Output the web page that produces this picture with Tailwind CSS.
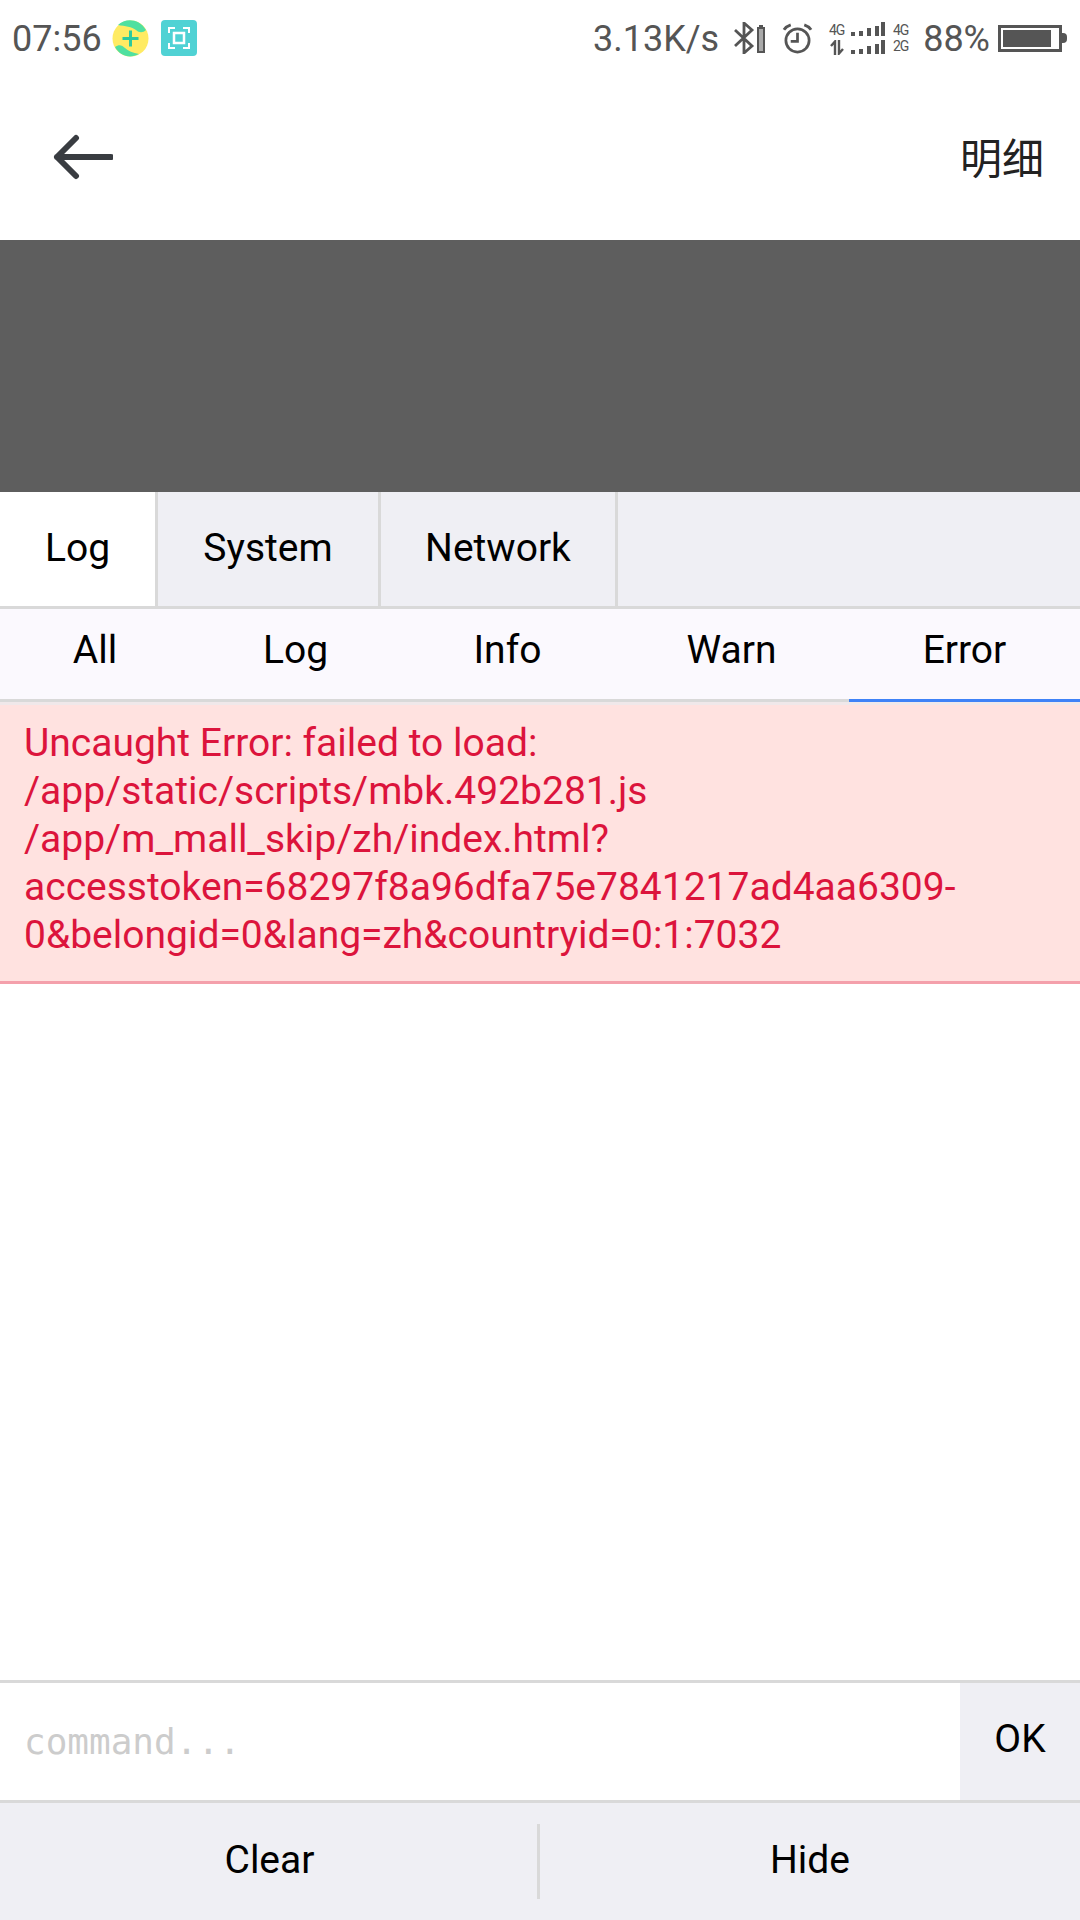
<!DOCTYPE html>
<html>
<head>
<meta charset="utf-8">
<script src="https://cdn.jsdelivr.net/npm/@tailwindcss/browser@4"></script>
</head>
<body class="m-0 bg-white font-['Roboto',sans-serif]">
<div class="flex h-[1920px] w-[1080px] flex-col overflow-hidden bg-white text-black">
  <!-- status bar -->
  <div class="flex h-[76px] shrink-0 items-center pl-[12px] pr-[13px] text-[#555] text-[36px]">
    <span class="pt-[1px] leading-none">07:56</span>
    <svg class="ml-[10px]" width="37" height="37" viewBox="0 0 37 37"><circle cx="18.500" cy="18.500" r="18" fill="#ffeb63"/><path d="M6 5C13-2 27-2 34 10 31 13 27 13 24 10 20 7 13 6 6 5Z" fill="#4fe0a0"/><path d="M3 27C7 24 10 25 13 28 16 31 21 33 27 34 18 39 8 36 3 27Z" fill="#4fe0a0"/><path d="M18.500 10.500v16M10.500 18.500h16" stroke="#2cc9a0" stroke-width="3" fill="none"/></svg>
    <svg class="ml-[12px]" width="36" height="36" viewBox="0 0 36 36"><rect width="36" height="36" rx="4" fill="#50d2d4"/><path d="M8 13V8h6M22 8h6v5M28 23v5h-6M14 28H8v-5" stroke="#fff" stroke-width="2" fill="none"/><rect x="13" y="13" width="10" height="10" stroke="#fff" stroke-width="2.500" fill="none"/></svg>
    <span class="ml-auto pt-[1px] leading-none">3.13K/s</span>
    <svg class="ml-[15px]" width="32" height="32" viewBox="0 0 32 32"><path d="M1 8l17 16-8 7V1l8 7L1 24" stroke="#555" stroke-width="2.800" fill="none"/><rect x="24" y="6" width="6" height="24" stroke="#555" stroke-width="2" fill="#aaa"/><rect x="25" y="3" width="4" height="3" fill="#555"/></svg>
    <svg class="ml-[16px]" width="31" height="31" viewBox="0 0 32 32"><circle cx="16" cy="18" r="12" stroke="#555" stroke-width="2.800" fill="none"/><path d="M16 10v9H9" stroke="#555" stroke-width="2.800" fill="none"/><path d="M2 7c2-3 4-4 7-5M30 7c-2-3-4-4-7-5" stroke="#555" stroke-width="3" fill="none"/></svg>
    <div class="ml-[14px] flex h-[33px] w-[19px] flex-col items-center text-[14px] leading-[16px] tracking-[-1px]"><span>4G</span><svg class="mt-[2px]" width="14" height="15" viewBox="0 0 14 15"><path d="M5 15V1.500L1 6M9 0v13.500L13 9" stroke="#555" stroke-width="2.400" fill="none"/></svg></div>
    <svg class="ml-[5px]" width="34" height="33" viewBox="0 0 34 33"><g fill="#555"><rect x="0" y="10" width="4" height="4"/><rect x="8" y="9" width="4" height="5"/><rect x="16" y="6" width="4" height="8"/><rect x="24" y="4" width="4" height="10"/><rect x="30" y="0" width="4" height="14"/><rect x="0" y="28" width="4" height="4"/><rect x="8" y="27" width="4" height="5"/><rect x="16" y="24" width="4" height="8"/><rect x="24" y="22" width="4" height="10"/><rect x="30" y="18" width="4" height="14"/></g></svg>
    <div class="ml-[6px] flex h-[33px] w-[19px] flex-col items-center text-[14px] leading-[16px] tracking-[-1px]"><span>4G</span><span>2G</span></div>
    <span class="ml-[13px] pt-[1px] leading-none">88%</span>
    <div class="ml-[8px] flex items-center">
      <div class="flex h-[27px] w-[64px] items-center border-[3px] border-[#555] p-[2px]"><div class="h-full w-[48px] bg-[#555]"></div></div>
      <div class="h-[10px] w-[5px] rounded-r-sm bg-[#555]"></div>
    </div>
  </div>
  <!-- header -->
  <div class="flex h-[164px] shrink-0 items-center justify-between pl-[51px] pr-[36px]">
    <svg class="mb-[2px]" width="62" height="48" viewBox="0 0 62 48"><path d="M6 24H60M25 5L6 24l19 19" stroke="#393c41" stroke-width="6" stroke-linecap="round" stroke-linejoin="round" fill="none"/></svg>
    <span class="pb-[4px] font-['Noto_Sans_CJK_SC',sans-serif] text-[42px] leading-none text-[#222]">明细</span>
  </div>
  <div class="h-[252px] shrink-0 bg-[#5e5e5e]"></div>
  <!-- tabs -->
  <div class="flex h-[117px] shrink-0 border-b-[3px] border-[#d9d9d9] bg-[#efeff4] text-[39px] leading-none">
    <div class="flex w-[158px] items-center justify-center border-r-[3px] border-[#d9d9d9] bg-white pb-[2px]">Log</div>
    <div class="flex w-[223px] items-center justify-center border-r-[3px] border-[#d9d9d9] pb-[2px]">System</div>
    <div class="flex w-[237px] items-center justify-center border-r-[3px] border-[#d9d9d9] pb-[2px]">Network</div>
  </div>
  <!-- sub tabs -->
  <div class="flex h-[93px] shrink-0 bg-[#fbf9fe] text-[39px] leading-none">
    <div class="flex w-[190px] items-center justify-center border-b-[3px] border-[#d9d9d9] pb-[8px]">All</div>
    <div class="flex w-[211px] items-center justify-center border-b-[3px] border-[#d9d9d9] pb-[8px]">Log</div>
    <div class="flex w-[213px] items-center justify-center border-b-[3px] border-[#d9d9d9] pb-[8px]">Info</div>
    <div class="flex w-[235px] items-center justify-center border-b-[3px] border-[#d9d9d9] pb-[8px]">Warn</div>
    <div class="flex w-[231px] items-center justify-center border-b-[3px] border-[#3e82f7] pb-[8px]">Error</div>
  </div>
  <div class="h-[3px] shrink-0 bg-[#f0e8ea]"></div>
  <!-- log -->
  <div class="shrink-0 border-b-[3px] border-[#f4a0ab] bg-[#ffe2e0] px-[24px] pb-[22px] pt-[14px] text-[39px] leading-[48px] text-[#dc143c]">
    <div>Uncaught Error: failed to load:</div>
    <div>/app/static/scripts/mbk.492b281.js</div>
    <div>/app/m_mall_skip/zh/index.html?</div>
    <div>accesstoken=68297f8a96dfa75e7841217ad4aa6309-</div>
    <div>0&amp;belongid=0&amp;lang=zh&amp;countryid=0:1:7032</div>
  </div>
  <div class="flex-1"></div>
  <!-- command -->
  <div class="flex h-[123px] shrink-0 border-y-[3px] border-[#d9d9d9]">
    <input class="min-w-0 flex-1 bg-white pl-[24px] font-['DejaVu_Sans_Mono',monospace] text-[36px] outline-none placeholder:text-[#ccc]" placeholder="command...">
    <div class="flex w-[120px] items-center justify-center bg-[#efeff4] pb-[4px] text-[39px] leading-none">OK</div>
  </div>
  <!-- bottom -->
  <div class="flex h-[117px] shrink-0 items-center bg-[#efeff4] text-[39px] leading-none">
    <div class="flex h-[75px] w-[540px] items-center justify-center border-r-[3px] border-[#d9d9d9] pb-[2px] pl-[2px]">Clear</div>
    <div class="flex flex-1 items-center justify-center pb-[2px]">Hide</div>
  </div>
</div>
</body>
</html>
